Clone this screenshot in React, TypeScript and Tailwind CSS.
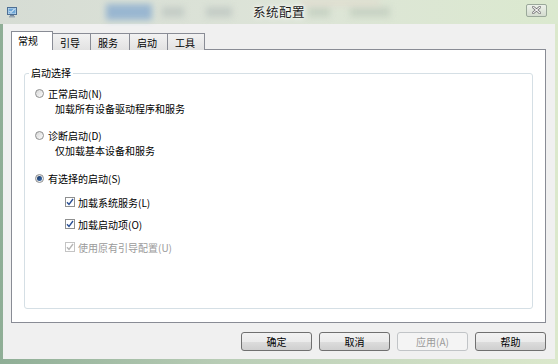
import React from "react";

const font = { fontFamily: '"Noto Sans CJK SC", "Noto Sans", sans-serif' };

function Radio({ checked }: { checked?: boolean }) {
  return (
    <span className="relative flex h-[9px] w-[9px] items-center justify-center rounded-full border border-[#8e8f8f] bg-gradient-to-br from-[#d7d7d7] to-[#fbfbfb]">
      {checked ? <span className="h-[5px] w-[5px] rounded-full bg-gradient-to-br from-[#16325e] to-[#3d74b8]" /> : null}
    </span>
  );
}

function Checkbox({ disabled }: { disabled?: boolean }) {
  return (
    <span
      className={
        "flex h-[10px] w-[10px] items-center justify-center border bg-white " +
        (disabled ? "border-[#c4c4c4]" : "border-[#8e8f8f]")
      }
    >
      <svg width="8" height="8" viewBox="0 0 8 8">
        <path
          d="M1 4.2 L3 6.4 L7 1"
          fill="none"
          stroke={disabled ? "#b5b5b5" : "#2a4f94"}
          strokeWidth="1.4"
        />
      </svg>
    </span>
  );
}

function Btn({ label, disabled }: { label: string; disabled?: boolean }) {
  return (
    <div
      className={
        "flex h-[19px] w-[71px] items-center justify-center rounded-[3px] border text-[10px] " +
        (disabled
          ? "border-[#c1c4c7] bg-[#f4f4f4] text-[#9a9a9a]"
          : "border-[#707070] bg-[linear-gradient(#f2f2f2_0%,#ebebeb_50%,#dddddd_50%,#cfcfcf_100%)] text-black")
      }
    >
      {label}
    </div>
  );
}

export default function App() {
  const tabs = [
    { label: "引导", w: "w-[39px]" },
    { label: "服务", w: "w-[40px]" },
    { label: "启动", w: "w-[39px]" },
    { label: "工具", w: "w-[38px]" },
  ];

  return (
    <div
      className="relative flex h-[364px] w-[558px] flex-col overflow-hidden bg-[linear-gradient(90deg,#8fae96_0%,#b9cdb6_40%,#dbe8cc_100%)]"
      style={font}
    >
      {/* glass title bar */}
      <div className="relative flex h-[24px] shrink-0 items-center bg-[linear-gradient(90deg,#d6dcd4_0%,#dde4d8_50%,#dbe9cf_100%)]">
        <div className="absolute left-[106px] top-[4px] h-[16px] w-[46px] bg-[#7fa6cf] opacity-70 blur-[3px]" />
        <div className="absolute left-[162px] top-[7px] h-[10px] w-[22px] bg-[#c4ccc6] blur-[3px]" />
        <div className="absolute left-[206px] top-[7px] h-[10px] w-[26px] bg-[#c4ccc6] blur-[3px]" />
        <div className="absolute left-[308px] top-[7px] h-[10px] w-[22px] bg-[#c8d3c4] blur-[3px]" />
        <div className="absolute left-[350px] top-[7px] h-[10px] w-[40px] bg-[#c8d3c4] blur-[3px]" />
        <div className="absolute left-[300px] top-0 h-[6px] w-[80px] bg-[#e4d8cc] opacity-60 blur-[3px]" />

        <div className="relative ml-[7px] flex h-[11px] w-[10px]">
          <svg width="10" height="11" viewBox="0 0 10 11">
            <rect x="0.5" y="0.5" width="9" height="7" fill="#cfe3f3" stroke="#4d6f94" />
            <rect x="1.5" y="1.5" width="7" height="5" fill="#6fa8d8" />
            <path d="M2.5 4 L4 5.5 L7.5 2" fill="none" stroke="#ffffff" strokeWidth="1" />
            <rect x="3" y="8" width="4" height="1" fill="#7a8a99" />
            <rect x="2" y="9" width="6" height="1.5" fill="#9aa7b3" />
          </svg>
        </div>
        <div className="relative flex-1 pl-[15px] text-center text-[12.5px] tracking-[0.5px] text-[#1a1a1a] [text-shadow:0_0_6px_#ffffff,0_0_3px_#ffffff]">
          系统配置
        </div>
        <div className="relative mr-[11px] flex h-[13px] w-[21px] -translate-y-[2px] items-center justify-center rounded-[2px] border border-[#9aa89a] bg-[linear-gradient(#edf2ea,#d4dccf)]">
          <svg width="9" height="8" viewBox="0 0 9 8">
            <path d="M1 1 L8 7 M8 1 L1 7" stroke="#6d6d6d" strokeWidth="2.6" strokeLinecap="square" />
            <path d="M1 1 L8 7 M8 1 L1 7" stroke="#f4f4f4" strokeWidth="1.1" strokeLinecap="square" />
          </svg>
        </div>
      </div>

      {/* client area */}
      <div className="mx-[3px] flex h-[335px] flex-col bg-[#f0f0f0] pl-[8px] pr-[9px] pt-[7px]">
        {/* tab strip */}
        <div className="relative z-10 flex h-[19px] items-end">
          <div className="flex h-[19px] w-[42px] items-start border border-b-0 border-[#898c95] bg-white pl-[6px] pt-[2px] text-[10px] leading-[14px] text-black">
            常规
          </div>
          {tabs.map((t) => (
            <div
              key={t.label}
              className={
                "-ml-px flex h-[17px] items-center border border-b-0 border-[#898c95] bg-[linear-gradient(#f2f2f2,#e2e2e2)] pl-[7px] pt-[1px] text-[10px] text-black " +
                t.w
              }
            >
              {t.label}
            </div>
          ))}
        </div>

        {/* tab panel */}
        <div className="-mt-px flex h-[274px] flex-col border border-[#898c95] bg-white px-[12px] pb-[13px] pt-[23px]">
          <div className="relative flex flex-1 flex-col rounded-[3px] border border-[#d5dfe5] pl-[10px] pt-[12px] text-[10px] text-black">
            <span className="absolute -top-[8px] left-[4px] bg-white px-[2px] leading-[14px]">启动选择</span>

            <div className="flex h-[14px] items-center gap-[4px]">
              <Radio />
              <span>正常启动(N)</span>
            </div>
            <div className="ml-[20px] mt-[1px] flex h-[14px] items-center">加载所有设备驱动程序和服务</div>

            <div className="mt-[13px] flex h-[14px] items-center gap-[4px]">
              <Radio />
              <span>诊断启动(D)</span>
            </div>
            <div className="ml-[20px] mt-[1px] flex h-[14px] items-center">仅加载基本设备和服务</div>

            <div className="mt-[14px] flex h-[14px] items-center gap-[4px]">
              <Radio checked />
              <span>有选择的启动(S)</span>
            </div>

            <div className="ml-[30px] mt-[10px] flex h-[14px] items-center gap-[3px]">
              <Checkbox />
              <span>加载系统服务(L)</span>
            </div>
            <div className="ml-[30px] mt-[8px] flex h-[14px] items-center gap-[3px]">
              <Checkbox />
              <span>加载启动项(O)</span>
            </div>
            <div className="ml-[30px] mt-[9px] flex h-[14px] items-center gap-[3px] text-[#9a9a9a]">
              <Checkbox disabled />
              <span>使用原有引导配置(U)</span>
            </div>
          </div>
        </div>

        {/* buttons */}
        <div className="mt-[9px] flex justify-end gap-[7px]">
          <Btn label="确定" />
          <Btn label="取消" />
          <Btn label="应用(A)" disabled />
          <Btn label="帮助" />
        </div>
      </div>
    </div>
  );
}
